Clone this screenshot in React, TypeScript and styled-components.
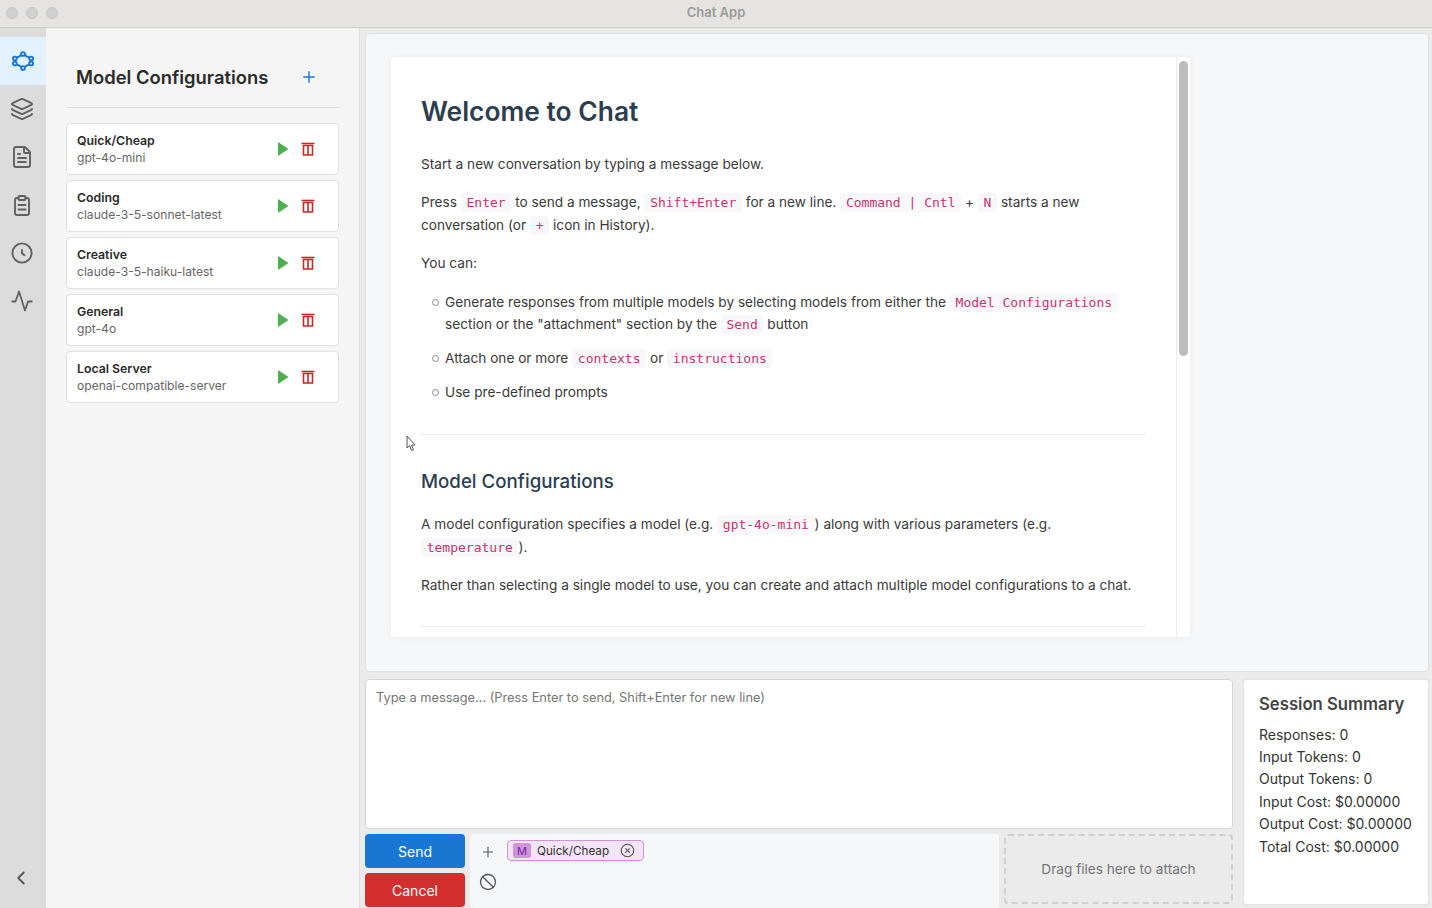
import styled, { createGlobalStyle } from "styled-components";
import { Ban, ChevronLeft, CircleX, FileText, Layers, Plus } from "lucide-react";

const configs = [
  { name: "Quick/Cheap", model: "gpt-4o-mini" },
  { name: "Coding", model: "claude-3-5-sonnet-latest" },
  { name: "Creative", model: "claude-3-5-haiku-latest" },
  { name: "General", model: "gpt-4o" },
  { name: "Local Server", model: "openai-compatible-server" },
];

const summary = [
  "Responses: 0",
  "Input Tokens: 0",
  "Output Tokens: 0",
  "Input Cost: $0.00000",
  "Output Cost: $0.00000",
  "Total Cost: $0.00000",
];

const ModelsIcon = () => (
  <svg width="24" height="24" viewBox="0 0 24 24" fill="#e3f2fd" stroke="#1976d2" strokeWidth="1.9">
    <path d="M5.5 8.5 Q8 8 10.5 5.8 M13.5 5.8 Q16 8 18.5 8.5 M5.5 15.5 Q8 16 10.5 18.2 M13.5 18.2 Q16 16 18.5 15.5" fill="none" />
    <circle cx="12" cy="5" r="1.9" />
    <circle cx="12" cy="19" r="1.9" />
    <circle cx="3.8" cy="9.5" r="1.9" />
    <circle cx="3.8" cy="14.5" r="1.9" />
    <circle cx="20.2" cy="9.5" r="1.9" />
    <circle cx="20.2" cy="14.5" r="1.9" />
  </svg>
);

const ClipboardIcon = () => (
  <svg width="24" height="24" viewBox="0 0 24 24" fill="none" stroke="currentColor" strokeWidth="1.9" strokeLinecap="round" strokeLinejoin="round">
    <path d="M8.5 5 H7 a2 2 0 0 0 -2 2 V20 a2 2 0 0 0 2 2 H17 a2 2 0 0 0 2 -2 V7 a2 2 0 0 0 -2 -2 H15.5" />
    <rect x="8.5" y="3" width="7" height="4" rx="1" />
    <path d="M8.5 12 H15.5 M8.5 16.5 H15.5" />
  </svg>
);

const ClockIcon = () => (
  <svg width="24" height="24" viewBox="0 0 24 24" fill="none" stroke="currentColor" strokeWidth="1.9" strokeLinecap="round" strokeLinejoin="round">
    <circle cx="12" cy="12" r="9.6" />
    <path d="M12 9 V12.2 L14.4 14.2" />
  </svg>
);

const PulseIcon = () => (
  <svg width="24" height="24" viewBox="0 0 24 24" fill="none" stroke="currentColor" strokeWidth="1.8" strokeLinejoin="round">
    <path d="M1.5 12.5 H5.5 L9 2.5 L15 21.5 L18 12.5 H22.5" />
  </svg>
);

const PlayIcon = () => (
  <svg width="12" height="16" viewBox="0 0 12 16">
    <path d="M1 1 L11.5 8 L1 15 Z" fill="#4caf50" />
  </svg>
);

const TrashIcon = () => (
  <svg width="14" height="14" viewBox="0 0 14 14" fill="none" stroke="#c62828" strokeWidth="1.6">
    <path d="M0.5 1.5 H13.5" />
    <path d="M2.5 3.5 H11.5 V13 H2.5 Z" />
    <path d="M7 3.5 V13" />
  </svg>
);

const Cursor = () => (
  <svg width="11" height="17" viewBox="0 0 11 17">
    <path d="M1 1 L1 13 L3.6 10.6 L5.6 15.5 L7.4 14.7 L5.6 10 L9 10 Z" fill="#fff" stroke="#555" strokeWidth="1" />
  </svg>
);

const App = () => {
  return (
    <>
      <GlobalStyle />
      <Window>
        <TitleBar>
          <Lights>
            <Light />
            <Light />
            <Light />
          </Lights>
          Chat App
        </TitleBar>
        <Body>
          <Rail>
            <RailButton $active>
              <ModelsIcon />
            </RailButton>
            <RailButton>
              <Layers size={24} strokeWidth={1.9} />
            </RailButton>
            <RailButton>
              <FileText size={24} strokeWidth={1.9} />
            </RailButton>
            <RailButton>
              <ClipboardIcon />
            </RailButton>
            <RailButton>
              <ClockIcon />
            </RailButton>
            <RailButton>
              <PulseIcon />
            </RailButton>
            <Collapse>
              <ChevronLeft size={22} strokeWidth={2} />
            </Collapse>
          </Rail>

          <ConfigPanel>
            <ConfigHeader>
              <ConfigTitle>Model Configurations</ConfigTitle>
              <Plus size={18} color="#1976d2" strokeWidth={1.8} />
            </ConfigHeader>
            <ConfigList>
              {configs.map((c) => (
                <ConfigCard key={c.name}>
                  <ConfigText>
                    <ConfigName>{c.name}</ConfigName>
                    <ConfigModel>{c.model}</ConfigModel>
                  </ConfigText>
                  <PlayIcon />
                  <TrashIcon />
                </ConfigCard>
              ))}
            </ConfigList>
          </ConfigPanel>

          <Main>
            <Messages>
              <Article>
                <ArticleBody>
                  <H1>Welcome to Chat</H1>
                  <P>Start a new conversation by typing a message below.</P>
                  <P>
                    Press <Code>Enter</Code> to send a message, <Code>Shift+Enter</Code> for a new line.{" "}
                    <Code>Command | Cntl</Code> + <Code>N</Code> starts a new conversation (or <Code>+</Code> icon in
                    History).
                  </P>
                  <P>You can:</P>
                  <List>
                    <Item>
                      Generate responses from multiple models by selecting models from either the{" "}
                      <Code>Model Configurations</Code> section or the "attachment" section by the <Code>Send</Code>{" "}
                      button
                    </Item>
                    <Item>
                      Attach one or more <Code>contexts</Code> or <Code>instructions</Code>
                    </Item>
                    <Item>Use pre-defined prompts</Item>
                  </List>
                  <Rule />
                  <H2>Model Configurations</H2>
                  <P>
                    A model configuration specifies a model (e.g. <Code>gpt-4o-mini</Code>) along with various
                    parameters (e.g. <Code>temperature</Code>).
                  </P>
                  <P>
                    Rather than selecting a single model to use, you can create and attach multiple model
                    configurations to a chat.
                  </P>
                  <Rule />
                </ArticleBody>
                <ScrollTrack>
                  <ScrollThumb />
                </ScrollTrack>
              </Article>
              <CursorSpot>
                <Cursor />
              </CursorSpot>
            </Messages>

            <Composer>
              <ComposerLeft>
                <MessageInput readOnly placeholder="Type a message... (Press Enter to send, Shift+Enter for new line)" />
                <Controls>
                  <Buttons>
                    <ActionButton $color="#1976d2">Send</ActionButton>
                    <ActionButton $color="#d32f2f">Cancel</ActionButton>
                  </Buttons>
                  <Attachments>
                    <AttachTools>
                      <Plus size={16} color="#555" strokeWidth={1.6} />
                      <Ban size={18} color="#555" strokeWidth={1.7} />
                    </AttachTools>
                    <Chip>
                      <ChipBadge>M</ChipBadge>
                      Quick/Cheap
                      <ChipClose>
                        <CircleX size={15} color="#555" strokeWidth={1.8} />
                      </ChipClose>
                    </Chip>
                  </Attachments>
                  <DropZone>Drag files here to attach</DropZone>
                </Controls>
              </ComposerLeft>
              <Summary>
                <SummaryTitle>Session Summary</SummaryTitle>
                {summary.map((line) => (
                  <SummaryLine key={line}>{line}</SummaryLine>
                ))}
              </Summary>
            </Composer>
          </Main>
        </Body>
      </Window>
    </>
  );
};

const GlobalStyle = createGlobalStyle`
  html, body {
    margin: 0;
    padding: 0;
    font-family: Inter, "Liberation Sans", sans-serif;
  }
  * {
    box-sizing: border-box;
  }
`;

const Window = styled.div`
  width: 1432px;
  height: 908px;
  display: flex;
  flex-direction: column;
  overflow: hidden;
  background: #ebebeb;
`;

const TitleBar = styled.div`
  height: 28px;
  flex: none;
  position: relative;
  display: flex;
  align-items: center;
  justify-content: center;
  padding-bottom: 3px;
  background: #e5e4e2;
  border-bottom: 1px solid #cfcfcd;
  color: #9b9b9b;
  font-size: 13px;
  font-weight: 600;
`;

const Lights = styled.div`
  position: absolute;
  left: 6px;
  top: 7px;
  display: flex;
  gap: 8px;
`;

const Light = styled.span`
  width: 12px;
  height: 12px;
  border-radius: 50%;
  background: #d0d0d0;
  border: 1px solid #c6c6c6;
`;

const Body = styled.div`
  flex: 1;
  min-height: 0;
  display: flex;
`;

const Rail = styled.nav`
  width: 46px;
  flex: none;
  display: flex;
  flex-direction: column;
  padding-top: 9px;
  background: #dcdcdc;
`;

const RailButton = styled.div<{ $active?: boolean }>`
  height: 48px;
  flex: none;
  display: flex;
  align-items: center;
  justify-content: center;
  padding-right: ${(p) => (p.$active ? "1px" : "3px")};
  color: #616161;
  background: ${(p) => (p.$active ? "#e3f2fd" : "transparent")};
`;

const Collapse = styled.div`
  margin-top: auto;
  height: 60px;
  display: flex;
  align-items: center;
  justify-content: center;
  padding-right: 4px;
  color: #555;
`;

const ConfigPanel = styled.aside`
  width: 314px;
  flex: none;
  padding: 0 19px 0 20px;
  background: #f5f5f5;
  border-right: 1px solid #e0e0e0;
`;

const ConfigHeader = styled.div`
  height: 80px;
  display: flex;
  align-items: center;
  justify-content: space-between;
  padding: 19px 22px 0 10px;
  border-bottom: 1px solid #e0e0e0;
`;

const ConfigTitle = styled.h2`
  margin: 0;
  font-size: 18.4px;
  font-weight: 600;
  color: #2b2b2b;
`;

const ConfigList = styled.div`
  margin-top: 15px;
  display: flex;
  flex-direction: column;
  gap: 5px;
`;

const ConfigCard = styled.div`
  height: 52px;
  width: 273px;
  display: flex;
  align-items: center;
  gap: 12px;
  padding: 0 23px 0 10px;
  background: #fff;
  border: 1px solid #e0e0e0;
  border-radius: 4px;
`;

const ConfigText = styled.div`
  flex: 1;
  min-width: 0;
  padding-top: 1px;
`;

const ConfigName = styled.div`
  font-size: 12.3px;
  font-weight: 600;
  line-height: 16.5px;
  color: #2b2b2b;
`;

const ConfigModel = styled.div`
  font-size: 12.1px;
  line-height: 16px;
  color: #666;
`;

const Main = styled.main`
  flex: 1;
  min-width: 0;
  display: flex;
  flex-direction: column;
  padding: 5px 3px 0 5px;
`;

const Messages = styled.section`
  height: 639px;
  flex: none;
  position: relative;
  padding: 23px 25px;
  background: #f6f7f9;
  border: 1px solid #e2e2e2;
  border-radius: 4px;
`;

const CursorSpot = styled.div`
  position: absolute;
  left: 40px;
  top: 401px;
`;

const Article = styled.article`
  width: 799px;
  height: 580px;
  display: flex;
  overflow: hidden;
  background: #fff;
  border-radius: 4px;
  box-shadow: 0 0 6px rgba(0, 0, 0, 0.05);
`;

const ArticleBody = styled.div`
  flex: 1;
  min-width: 0;
  padding: 30px;
  color: #3a3a3a;
  font-size: 13.65px;
  line-height: 22.4px;
`;

const ScrollTrack = styled.div`
  width: 14px;
  flex: none;
  padding: 4px 2px 0 2px;
  border-left: 1px solid #ececec;
`;

const ScrollThumb = styled.div`
  height: 295px;
  background: #bdbdbd;
  border-radius: 5px;
`;

const H1 = styled.h1`
  margin: 0 0 18px;
  font-size: 26.4px;
  line-height: 48px;
  font-weight: 600;
  color: #2c3e50;
`;

const H2 = styled.h2`
  margin: 33px 0 17px;
  font-size: 18.7px;
  line-height: 28px;
  font-weight: 500;
  color: #2c3e50;
`;

const P = styled.p`
  margin: 0 0 16px;
`;

const List = styled.ul`
  margin: 0 0 31px;
  padding-left: 24px;
  list-style: none;
`;

const Item = styled.li`
  position: relative;
  margin-bottom: 11.6px;
  &::before {
    content: "";
    position: absolute;
    left: -13px;
    top: 8px;
    width: 5px;
    height: 5px;
    border: 1px solid #8a8a8a;
    border-radius: 50%;
  }
`;

const Rule = styled.hr`
  margin: 29.5px 0;
  border: 0;
  border-top: 1px solid #ececec;
`;

const Code = styled.code`
  padding: 2px 5.7px;
  border-radius: 4px;
  background: #f8f8fa;
  color: #c7336f;
  font-family: "DejaVu Sans Mono", monospace;
  font-size: 13px;
  line-height: 1;
`;

const Composer = styled.div`
  flex: 1;
  min-height: 0;
  display: flex;
  gap: 10px;
  padding-top: 7px;
`;

const ComposerLeft = styled.div`
  width: 868px;
  flex: none;
  display: flex;
  flex-direction: column;
  gap: 5px;
`;

const MessageInput = styled.textarea`
  height: 150px;
  flex: none;
  padding: 10px;
  resize: none;
  outline: none;
  background: #fff;
  border: 1px solid #d6d6d6;
  border-radius: 4px;
  font-family: inherit;
  font-size: 12.8px;
  &::placeholder {
    color: #757575;
  }
`;

const Controls = styled.div`
  flex: 1;
  display: flex;
  gap: 5px;
`;

const Buttons = styled.div`
  width: 100px;
  flex: none;
  display: flex;
  flex-direction: column;
  gap: 5px;
`;

const ActionButton = styled.button<{ $color: string }>`
  height: 34px;
  border: 0;
  border-radius: 4px;
  background: ${(p) => p.$color};
  color: #fff;
  font-family: inherit;
  font-size: 14px;
`;

const Attachments = styled.div`
  width: 529px;
  flex: none;
  display: flex;
  align-items: flex-start;
  gap: 10px;
  padding: 6px 0 0 9px;
  background: #f6f7f9;
  border-radius: 4px;
`;

const AttachTools = styled.div`
  width: 18px;
  flex: none;
  display: flex;
  flex-direction: column;
  align-items: center;
  gap: 13px;
  padding-top: 4px;
`;

const Chip = styled.div`
  height: 21px;
  display: flex;
  align-items: center;
  gap: 6px;
  padding: 0 8px 0 5px;
  background: #f3e5f5;
  border: 1px solid #ce93d8;
  border-radius: 4px;
  color: #333;
  font-size: 11.7px;
`;

const ChipBadge = styled.span`
  width: 18px;
  height: 15px;
  display: flex;
  align-items: center;
  justify-content: center;
  background: #ce93d8;
  border-radius: 3px;
  color: #7b1fa2;
  font-size: 11px;
`;

const ChipClose = styled.span`
  display: flex;
  margin-left: 5px;
`;

const DropZone = styled.div`
  flex: 1;
  height: 70px;
  display: flex;
  align-items: center;
  justify-content: center;
  background: #ebebeb;
  border: 2px dashed #d0d0d0;
  border-radius: 4px;
  color: #757575;
  font-size: 13.65px;
`;

const Summary = styled.aside`
  flex: 1;
  height: 226px;
  padding: 13px 15px;
  background: #fff;
  border: 1px solid #e2e2e2;
  border-radius: 4px;
`;

const SummaryTitle = styled.h3`
  margin: 0 0 8.5px;
  font-size: 16.7px;
  line-height: 22px;
  font-weight: 600;
  color: #444;
`;

const SummaryLine = styled.div`
  font-size: 14px;
  line-height: 22.4px;
  color: #333;
`;

export default App;
